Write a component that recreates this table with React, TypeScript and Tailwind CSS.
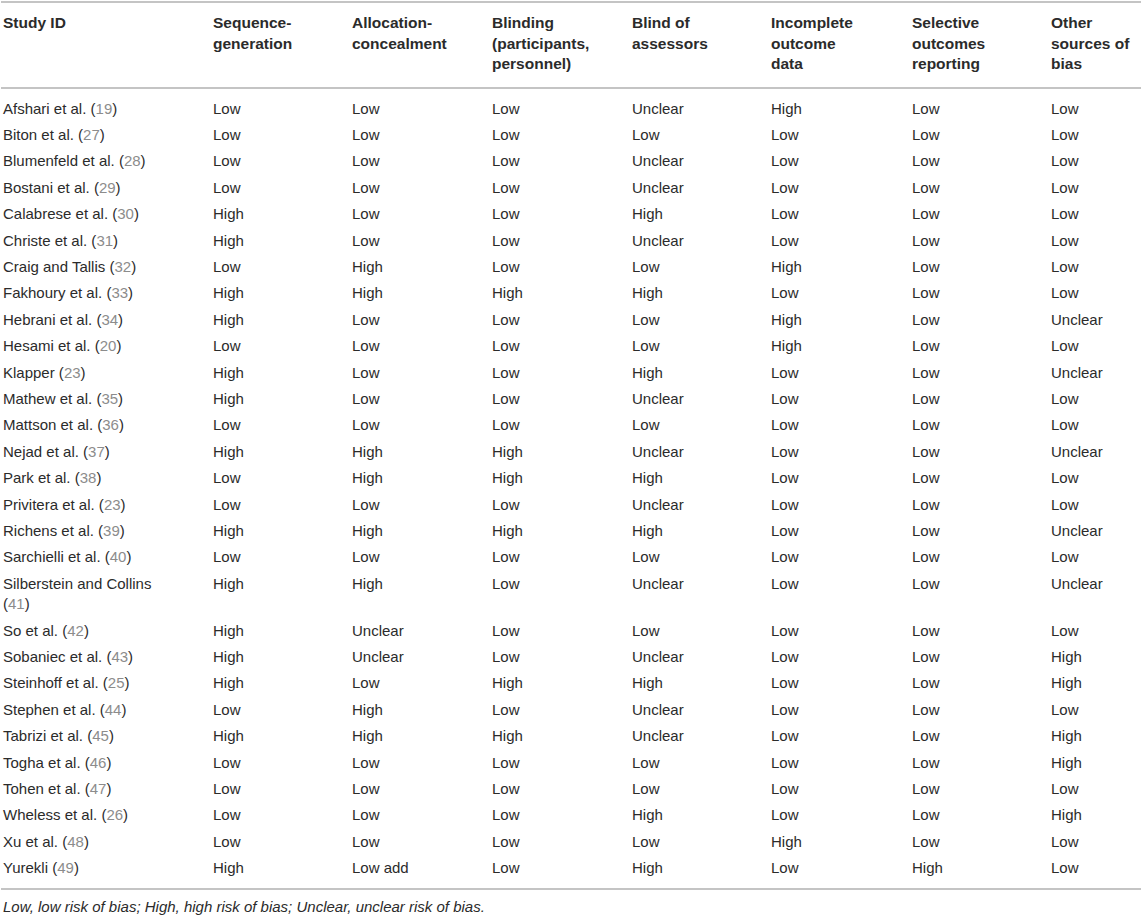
import React from "react";

type Row = { name: string; ref: string; cells: string[] };

const headers = [
  "Study ID",
  "Sequence-\ngeneration",
  "Allocation-\nconcealment",
  "Blinding\n(participants,\npersonnel)",
  "Blind of\nassessors",
  "Incomplete\noutcome\ndata",
  "Selective\noutcomes\nreporting",
  "Other\nsources of\nbias",
];

const rows: Row[] = [
  { name: "Afshari et al.", ref: "19", cells: ["Low", "Low", "Low", "Unclear", "High", "Low", "Low"] },
  { name: "Biton et al.", ref: "27", cells: ["Low", "Low", "Low", "Low", "Low", "Low", "Low"] },
  { name: "Blumenfeld et al.", ref: "28", cells: ["Low", "Low", "Low", "Unclear", "Low", "Low", "Low"] },
  { name: "Bostani et al.", ref: "29", cells: ["Low", "Low", "Low", "Unclear", "Low", "Low", "Low"] },
  { name: "Calabrese et al.", ref: "30", cells: ["High", "Low", "Low", "High", "Low", "Low", "Low"] },
  { name: "Christe et al.", ref: "31", cells: ["High", "Low", "Low", "Unclear", "Low", "Low", "Low"] },
  { name: "Craig and Tallis", ref: "32", cells: ["Low", "High", "Low", "Low", "High", "Low", "Low"] },
  { name: "Fakhoury et al.", ref: "33", cells: ["High", "High", "High", "High", "Low", "Low", "Low"] },
  { name: "Hebrani et al.", ref: "34", cells: ["High", "Low", "Low", "Low", "High", "Low", "Unclear"] },
  { name: "Hesami et al.", ref: "20", cells: ["Low", "Low", "Low", "Low", "High", "Low", "Low"] },
  { name: "Klapper", ref: "23", cells: ["High", "Low", "Low", "High", "Low", "Low", "Unclear"] },
  { name: "Mathew et al.", ref: "35", cells: ["High", "Low", "Low", "Unclear", "Low", "Low", "Low"] },
  { name: "Mattson et al.", ref: "36", cells: ["Low", "Low", "Low", "Low", "Low", "Low", "Low"] },
  { name: "Nejad et al.", ref: "37", cells: ["High", "High", "High", "Unclear", "Low", "Low", "Unclear"] },
  { name: "Park et al.", ref: "38", cells: ["Low", "High", "High", "High", "Low", "Low", "Low"] },
  { name: "Privitera et al.", ref: "23", cells: ["Low", "Low", "Low", "Unclear", "Low", "Low", "Low"] },
  { name: "Richens et al.", ref: "39", cells: ["High", "High", "High", "High", "Low", "Low", "Unclear"] },
  { name: "Sarchielli et al.", ref: "40", cells: ["Low", "Low", "Low", "Low", "Low", "Low", "Low"] },
  { name: "Silberstein and Collins", ref: "41", cells: ["High", "High", "Low", "Unclear", "Low", "Low", "Unclear"] },
  { name: "So et al.", ref: "42", cells: ["High", "Unclear", "Low", "Low", "Low", "Low", "Low"] },
  { name: "Sobaniec et al.", ref: "43", cells: ["High", "Unclear", "Low", "Unclear", "Low", "Low", "High"] },
  { name: "Steinhoff et al.", ref: "25", cells: ["High", "Low", "High", "High", "Low", "Low", "High"] },
  { name: "Stephen et al.", ref: "44", cells: ["Low", "High", "Low", "Unclear", "Low", "Low", "Low"] },
  { name: "Tabrizi et al.", ref: "45", cells: ["High", "High", "High", "Unclear", "Low", "Low", "High"] },
  { name: "Togha et al.", ref: "46", cells: ["Low", "Low", "Low", "Low", "Low", "Low", "High"] },
  { name: "Tohen et al.", ref: "47", cells: ["Low", "Low", "Low", "Low", "Low", "Low", "Low"] },
  { name: "Wheless et al.", ref: "26", cells: ["Low", "Low", "Low", "High", "Low", "Low", "High"] },
  { name: "Xu et al.", ref: "48", cells: ["Low", "Low", "Low", "Low", "High", "Low", "Low"] },
  { name: "Yurekli", ref: "49", cells: ["High", "Low add", "Low", "High", "Low", "High", "Low"] },
];

const cols = "grid grid-cols-[210px_139px_140px_140px_139px_141px_139px_1fr]";

export default function App() {
  return (
    <div className="bg-white w-[1143px] min-h-[917px] pt-[1px] pl-[1px] font-['Liberation_Sans',Arial,sans-serif] text-[#2b2b2b]">
      <div className="w-[1140px]">
        {/* header */}
        <div className={`${cols} border-t-2 border-b-2 border-[#c4c4c4] pt-[10px] pb-[12px]`}>
          {headers.map((h) => (
            <div key={h} className="pl-[2px] text-[15.5px] leading-[20.5px] font-bold whitespace-pre-line">
              {h}
            </div>
          ))}
        </div>

        {/* body */}
        <div className="pt-[7px] pb-[6px] border-b-2 border-[#c4c4c4]">
          {rows.map((r) => (
            <div key={r.name} className={`${cols} py-[3px] text-[15px] leading-[20.4px]`}>
              <div className="pl-[2px] pr-[45px]">
                {r.name} (<span className="text-[#8c8c8c]">{r.ref}</span>)
              </div>
              {r.cells.map((c, i) => (
                <div key={i} className="pl-[2px]">
                  {c}
                </div>
              ))}
            </div>
          ))}
        </div>

        <p className="pl-[2px] pt-[7px] text-[15px] italic leading-[20px]">
          Low, low risk of bias; High, high risk of bias; Unclear, unclear risk of bias.
        </p>
      </div>
    </div>
  );
}
